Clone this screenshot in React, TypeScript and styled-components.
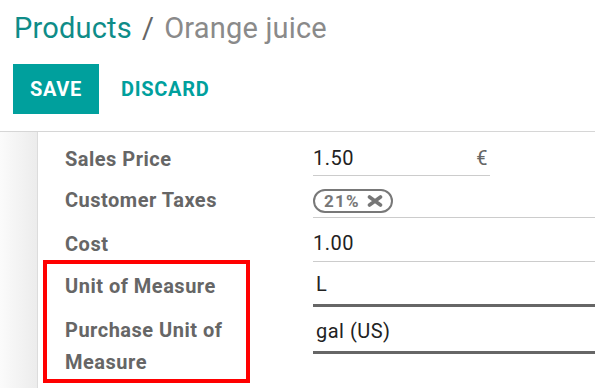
import { FC, ReactNode } from "react";
import styled, { createGlobalStyle } from "styled-components";

const GlobalStyle = createGlobalStyle`
  body {
    margin: 0;
    background: #fff;
    font-family: Roboto, "Liberation Sans", sans-serif;
  }
`;

interface IRow {
  label: ReactNode;
  children: ReactNode;
  gap: number;
  top?: boolean;
}

const FormRow: FC<IRow> = ({ label, children, gap, top }) => (
  <Row $gap={gap} $top={top}>
    <Label $top={top}>{label}</Label>
    {children}
  </Row>
);

const CloseIcon = () => (
  <svg width="16" height="12" viewBox="0 0 16 12">
    <path
      d="M2.5 2 L13.5 10 M13.5 2 L2.5 10"
      stroke="#777"
      strokeWidth="3.6"
      strokeLinecap="round"
    />
  </svg>
);

export default function App() {
  return (
    <Page>
      <GlobalStyle />
      <Header>
        <Breadcrumb>
          <Crumb>Products</Crumb>
          <Separator>/</Separator>
          <Current>Orange juice</Current>
        </Breadcrumb>

        <Controls>
          <SaveButton>Save</SaveButton>
          <DiscardButton>Discard</DiscardButton>
        </Controls>
      </Header>

      <Body>
        <Gutter />
        <Sheet>
          <FormRow label="Sales Price" gap={0}>
            <Field $height={35} $width={177}>
              1.50
              <Currency>€</Currency>
            </Field>
          </FormRow>

          <FormRow label="Customer Taxes" gap={6}>
            <Field $height={36}>
              <Tag>
                21%
                <CloseIcon />
              </Tag>
            </Field>
          </FormRow>

          <FormRow label="Cost" gap={7}>
            <Field $height={37}>1.00</Field>
          </FormRow>

          <FormRow label="Unit of Measure" gap={2}>
            <Field $height={43} $strong>
              L
            </Field>
          </FormRow>

          <FormRow
            label={
              <>
                Purchase Unit of
                <br />
                Measure
              </>
            }
            gap={4}
            top
          >
            <Field $height={43} $strong>
              gal (US)
            </Field>
          </FormRow>
        </Sheet>
      </Body>

      <Highlight />
    </Page>
  );
}

const Page = styled.div`
  position: relative;
  width: 595px;
  height: 388px;
  overflow: hidden;
`;

const Header = styled.div`
  padding: 11px 0 0 13px;
  height: 120px;
  box-sizing: border-box;
`;

const Breadcrumb = styled.div`
  display: flex;
  align-items: baseline;
  column-gap: 10px;
  padding-left: 1px;

  font-size: 29px;
  line-height: 34px;
  letter-spacing: 0.2px;
`;

const Crumb = styled.span`
  color: #0e8c88;
`;

const Separator = styled.span`
  color: #666;
`;

const Current = styled.span`
  color: #8a8a8a;
`;

const Controls = styled.div`
  display: flex;
  margin-top: 19px;
`;

const SaveButton = styled.button`
  height: 50px;
  width: 86px;
  padding: 0;
  border: none;

  background: #00a09d;
  color: #fff;
  font-family: inherit;
  font-size: 20px;
  font-weight: 700;
  letter-spacing: 0.7px;
  text-transform: uppercase;
`;

const DiscardButton = styled.button`
  height: 50px;
  padding: 0 22px;
  border: none;

  background: none;
  color: #00a09d;
  font-family: inherit;
  font-size: 20px;
  font-weight: 700;
  letter-spacing: 0.7px;
  text-transform: uppercase;
`;

const Body = styled.div`
  display: flex;
  height: 268px;
  margin-top: 11px;

  border-top: 1px solid #d6d6d6;
`;

const Gutter = styled.div`
  width: 37px;
  flex-shrink: 0;

  background: linear-gradient(to right, #fbfbfb, #ececec);
  border-right: 1px solid #dcdcdc;
`;

const Sheet = styled.div`
  flex: 1;
  padding: 9px 0 0 27px;
`;

const Row = styled.div<{ $gap: number; $top?: boolean }>`
  display: grid;
  grid-template-columns: 248px 1fr;
  align-items: ${({ $top }) => ($top ? "start" : "center")};
  margin-top: ${({ $gap }) => $gap}px;
`;

const Label = styled.div<{ $top?: boolean }>`
  padding-top: ${({ $top }) => ($top ? 3 : 0)}px;

  color: #666;
  font-size: 20px;
  font-weight: 700;
  line-height: 32px;
  letter-spacing: 0.5px;
`;

const Field = styled.div<{ $height: number; $width?: number; $strong?: boolean }>`
  display: flex;
  align-items: center;
  box-sizing: border-box;
  height: ${({ $height }) => $height}px;
  width: ${({ $width }) => ($width ? `${$width}px` : "auto")};
  padding-left: ${({ $strong }) => ($strong ? 3 : 0)}px;

  border-bottom: ${({ $strong }) => ($strong ? "3px solid #666" : "1px solid #ccc")};
  color: #222;
  font-size: 20px;
  letter-spacing: 0.5px;
`;

const Currency = styled.span`
  margin-left: auto;
  margin-right: 2px;
  color: #666;
`;

const Tag = styled.span`
  display: inline-flex;
  align-items: center;
  column-gap: 7px;
  height: 24px;
  padding: 0 8px 0 9px;
  box-sizing: border-box;
  margin-top: 3px;

  border: 2px solid #787878;
  border-radius: 12px;
  color: #777;
  font-size: 17px;
  font-weight: 700;
  letter-spacing: 1.3px;
`;

const Highlight = styled.div`
  position: absolute;
  left: 43px;
  top: 260px;
  width: 207px;
  height: 123px;
  box-sizing: border-box;

  border: 4px solid #ff0000;
  pointer-events: none;
`;
